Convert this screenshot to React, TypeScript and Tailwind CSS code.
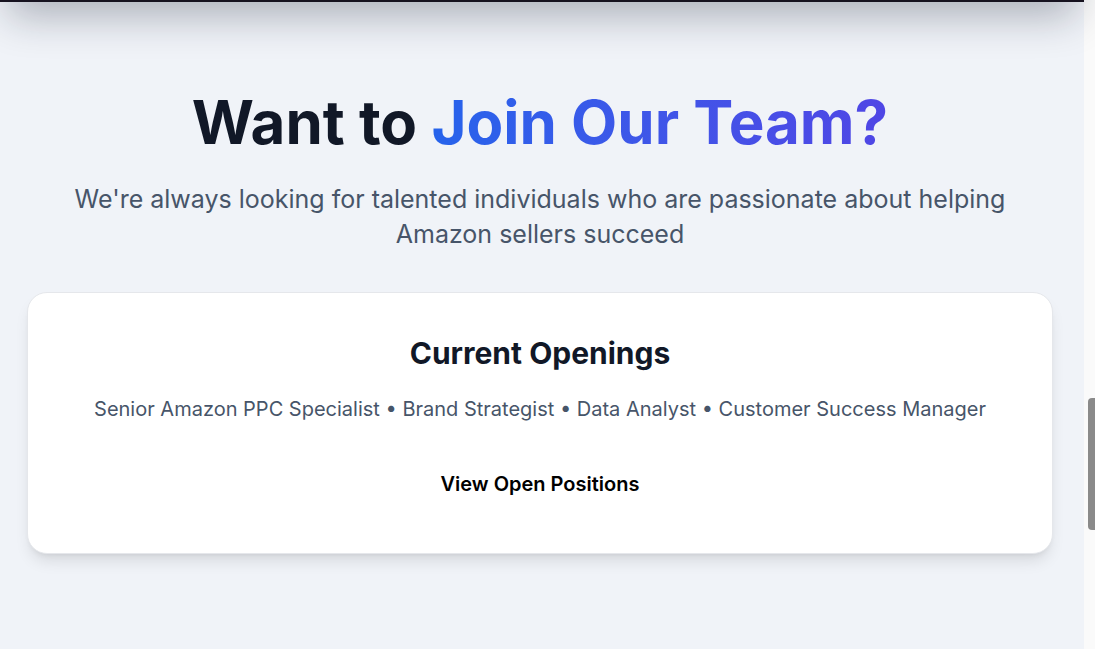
import React from "react";

export default function App() {
  return (
    <div className="flex h-[649px] w-full overflow-hidden bg-[#f0f3f8]" style={{ fontFamily: "Inter, 'Noto Sans', sans-serif" }}>
      <div className="flex w-[1084px] flex-col">
        <div className="relative z-10 mt-[-98px] h-[100px] w-full border-b-2 border-[#16121f] bg-[#16121f] shadow-[0_22px_40px_-8px_rgba(15,23,42,0.3)]" />
        <section className="flex flex-col items-center px-[27px] pr-[31px] pt-[84px]">
          <h2 className="text-[60px] font-bold leading-[72px] text-[#111827]">
            Want to{" "}
            <span className="bg-gradient-to-r from-[#2563eb] to-[#4f46e5] bg-clip-text text-transparent">
              Join Our Team?
            </span>
          </h2>
          <p className="mt-[24px] max-w-[990px] text-center text-[25px] leading-[35px] text-[#475569]">
            We're always looking for talented individuals who are passionate about helping Amazon sellers succeed
          </p>
          <div className="mt-[40px] flex h-[262px] w-full flex-col items-center rounded-[20px] border border-[#e5e7eb] bg-white shadow-lg">
            <h3 className="mt-[42px] text-[30px] font-bold leading-[36px] text-[#111827]">Current Openings</h3>
            <p className="mt-[24px] text-[20px] leading-[28px] text-[#475569]">
              Senior Amazon PPC Specialist • Brand Strategist • Data Analyst • Customer Success Manager
            </p>
            <button className="mt-[47px] text-[20px] font-semibold leading-[28px] text-black">View Open Positions</button>
          </div>
        </section>
      </div>
      <div className="flex w-[11px] flex-col bg-[#fafafa] pl-[4px] pt-[398px]">
        <div className="h-[132px] w-[7px] rounded-l-[4px] bg-[#8a8a8a]" />
      </div>
    </div>
  );
}
